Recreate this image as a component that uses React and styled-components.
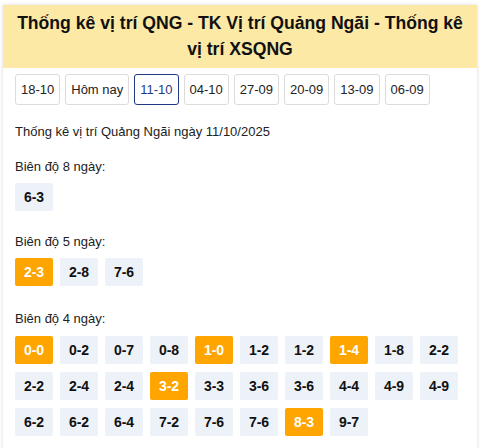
import styled, { createGlobalStyle } from "styled-components";

const GlobalStyle = createGlobalStyle`
  body {
    margin: 0;
    background: #fff;
    font-family: "Liberation Sans", Arial, sans-serif;
    color: #222;
  }
`;

const Card = styled.div`
  width: 474px;
  margin: 5px 0 0 3px;
  background: #fff;
  box-shadow: 0 0 4px rgba(0, 0, 0, 0.15);
  padding-bottom: 20px;
`;

const Header = styled.h1`
  margin: 0;
  padding: 5px 8px 6px;
  background: #fce9a6;
  font-size: 17.6px;
  line-height: 26px;
  font-weight: bold;
  text-align: center;
  color: #111;
`;

const Body = styled.div`
  padding: 6px 12px 0;
`;

const DateBar = styled.div`
  display: flex;
  gap: 5px;
`;

const DateButton = styled.div`
  padding: 6px 5px;
  border: 1px solid ${(p) => (p.active ? "#1f3a85" : "#dcdcdc")};
  border-radius: 3px;
  font-size: 13px;
  line-height: 17px;
  color: ${(p) => (p.active ? "#1f3a85" : "#222")};
`;

const Intro = styled.p`
  margin: 19px 0 0;
  font-size: 13px;
  line-height: 16px;
`;

const Label = styled.p`
  margin: ${(p) => p.top}px 0 ${(p) => p.bottom}px;
  font-size: 13px;
  line-height: 16px;
`;

const Chips = styled.div`
  display: flex;
  flex-wrap: wrap;
  gap: 8px 7px;
`;

const Chip = styled.div`
  width: 38px;
  height: 28px;
  display: flex;
  align-items: center;
  justify-content: center;
  border-radius: 2px;
  font-size: 14px;
  font-weight: bold;
  background: ${(p) => (p.hot ? "#ffa500" : "#edf1f8")};
  color: ${(p) => (p.hot ? "#fff" : "#111")};
`;

const dates = ["18-10", "Hôm nay", "11-10", "04-10", "27-09", "20-09", "13-09", "06-09"];

const groups = [
  { label: "Biên độ 8 ngày:", top: 19, bottom: 8, items: [["6-3"]] },
  { label: "Biên độ 5 ngày:", top: 23, bottom: 8, items: [["2-3", 1], ["2-8"], ["7-6"]] },
  {
    label: "Biên độ 4 ngày:",
    top: 25,
    bottom: 9,
    items: [
      ["0-0", 1], ["0-2"], ["0-7"], ["0-8"], ["1-0", 1], ["1-2"], ["1-2"], ["1-4", 1], ["1-8"], ["2-2"],
      ["2-2"], ["2-4"], ["2-4"], ["3-2", 1], ["3-3"], ["3-6"], ["3-6"], ["4-4"], ["4-9"], ["4-9"],
      ["6-2"], ["6-2"], ["6-4"], ["7-2"], ["7-6"], ["7-6"], ["8-3", 1], ["9-7"],
    ],
  },
];

const App = () => {
  return (
    <>
      <GlobalStyle />
      <Card>
        <Header>Thống kê vị trí QNG - TK Vị trí Quảng Ngãi - Thống kê vị trí XSQNG</Header>
        <Body>
          <DateBar>
            {dates.map((d) => (
              <DateButton key={d} active={d === "11-10"}>
                {d}
              </DateButton>
            ))}
          </DateBar>
          <Intro>Thống kê vị trí Quảng Ngãi ngày 11/10/2025</Intro>
          {groups.map((g) => (
            <div key={g.label}>
              <Label top={g.top} bottom={g.bottom}>{g.label}</Label>
              <Chips>
                {g.items.map(([v, hot], i) => (
                  <Chip key={i} hot={hot}>
                    {v}
                  </Chip>
                ))}
              </Chips>
            </div>
          ))}
        </Body>
      </Card>
    </>
  );
};

export default App;
